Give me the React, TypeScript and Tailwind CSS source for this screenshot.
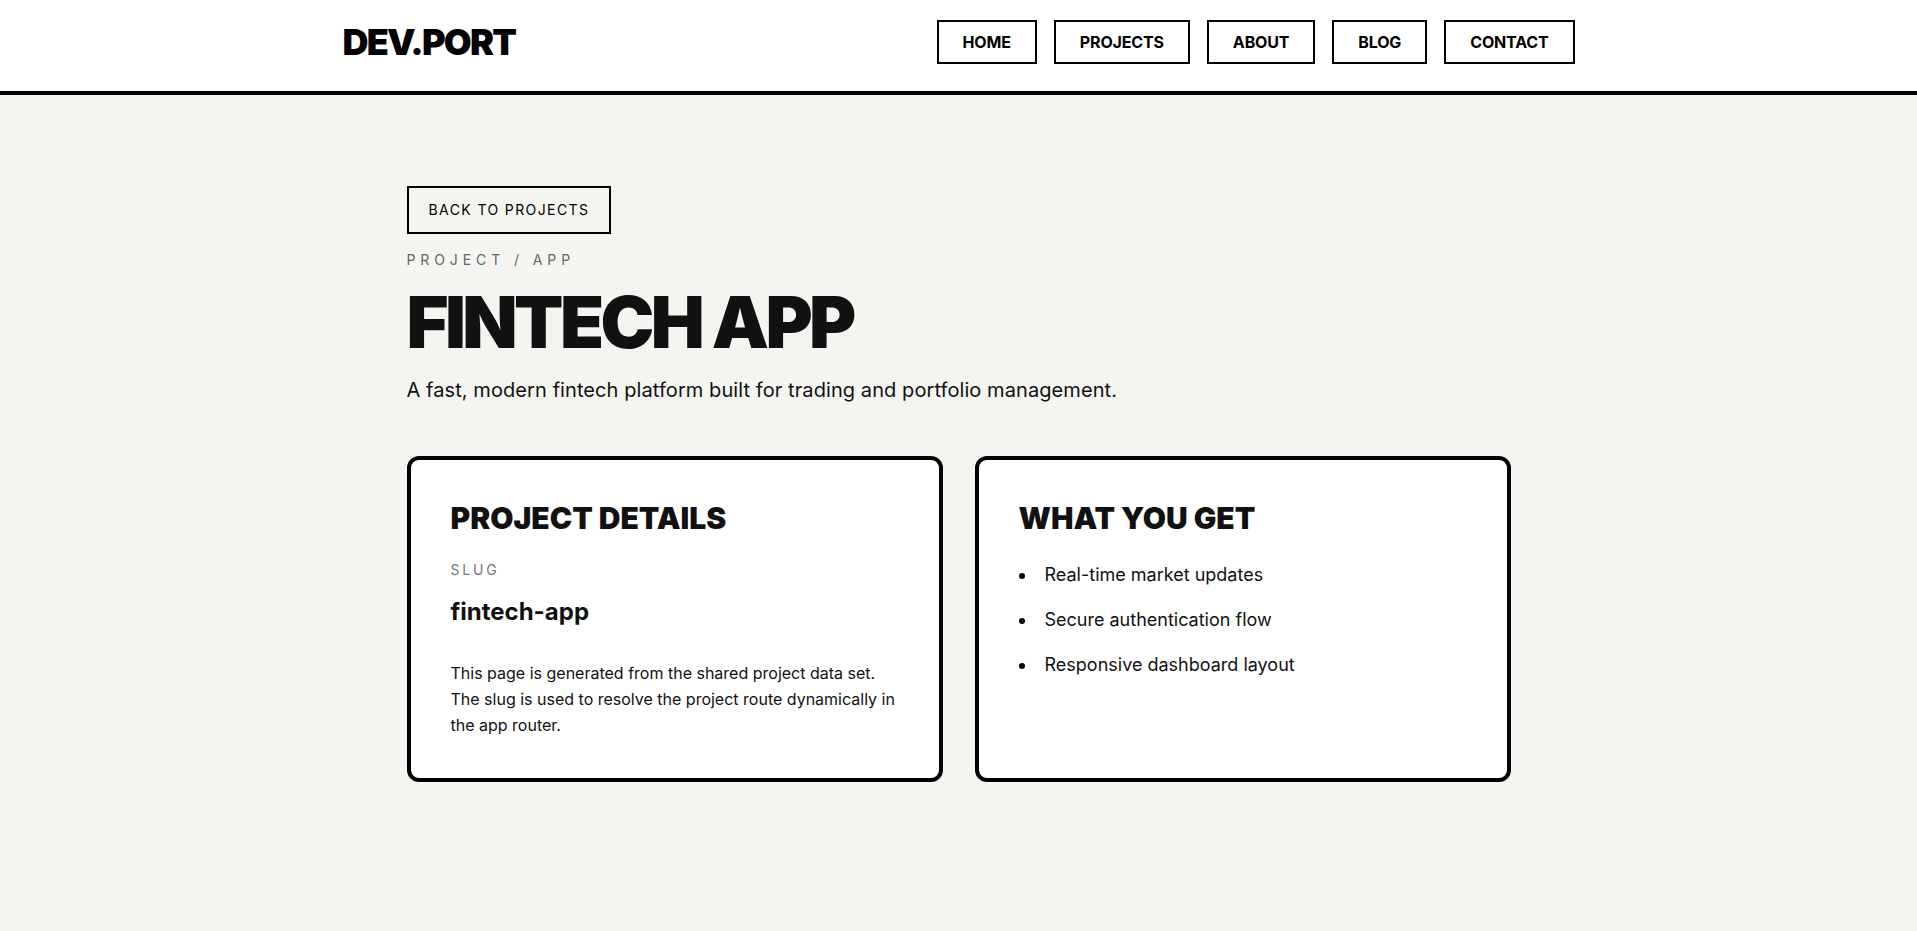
const navItems = ['HOME', 'PROJECTS', 'ABOUT', 'BLOG', 'CONTACT'];

const features = [
  'Real-time market updates',
  'Secure authentication flow',
  'Responsive dashboard layout',
];

function Header() {
  return (
    <header className="border-b-4 border-black bg-white">
      <div className="mx-auto flex w-[1232px] items-center justify-between pt-5 pb-[27px]">
        <a href="#" className="text-4xl leading-10 font-black tracking-tighter text-black">
          DEV.PORT
        </a>
        <nav className="flex gap-[17px]">
          {navItems.map((item) => (
            <a
              key={item}
              href="#"
              className="border-2 border-black px-6 py-2 text-base leading-6 font-bold tracking-[-0.01em] text-black"
            >
              {item}
            </a>
          ))}
        </nav>
      </div>
    </header>
  );
}

function Card({ children }: { children: React.ReactNode }) {
  return <div className="rounded-xl border-4 border-black bg-white p-10">{children}</div>;
}

export default function App() {
  return (
    <div className="min-h-screen bg-[#f4f4f0] font-['Inter',sans-serif] text-[#111111]">
      <Header />

      <main className="mx-auto max-w-6xl px-6 pt-[91px] pb-24">
        <a
          href="#"
          className="inline-block border-2 border-black px-5 py-3 text-sm leading-5 tracking-widest text-black"
        >
          BACK TO PROJECTS
        </a>

        <p className="mt-4 text-sm leading-5 tracking-[0.35em] text-[#666666]">PROJECT / APP</p>
        <h1 className="mt-4 text-7xl leading-none font-black tracking-tighter">FINTECH APP</h1>
        <p className="mt-[18px] text-xl leading-7 tracking-[0.004em]">
          A fast, modern fintech platform built for trading and portfolio management.
        </p>

        <div className="mt-[52px] grid grid-cols-2 gap-8">
          <Card>
            <h2 className="text-3xl leading-9 font-black">PROJECT DETAILS</h2>
            <p className="mt-6 text-sm leading-5 tracking-[0.2em] text-[#777777]">SLUG</p>
            <p className="mt-4 text-2xl leading-8 font-bold">fintech-app</p>
            <p className="mt-8 text-base leading-relaxed">
              This page is generated from the shared project data set. The slug is used to resolve
              the project route dynamically in the app router.
            </p>
          </Card>

          <Card>
            <h2 className="text-3xl leading-9 font-black">WHAT YOU GET</h2>
            <ul className="mt-[25px] flex flex-col gap-[17px]">
              {features.map((f) => (
                <li key={f} className="flex items-start gap-5 text-lg leading-7">
                  <span className="mt-[12px] h-[6px] w-[6px] shrink-0 rounded-full bg-black" />
                  <span>{f}</span>
                </li>
              ))}
            </ul>
          </Card>
        </div>
      </main>
    </div>
  );
}
